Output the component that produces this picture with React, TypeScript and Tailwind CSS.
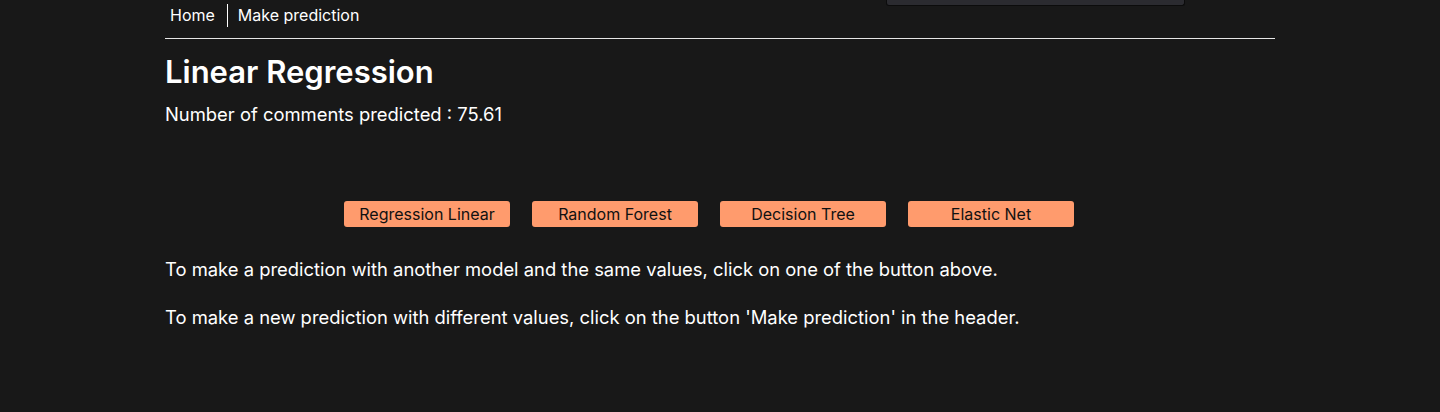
import React from "react";

const models = ["Regression Linear", "Random Forest", "Decision Tree", "Elastic Net"];

export default function App() {
  return (
    <div
      className="relative min-h-[412px] w-full bg-[#181818] text-white"
      style={{ fontFamily: "Inter, 'Noto Sans', sans-serif" }}
    >
      {/* dropdown edge peeking from above */}
      <div className="absolute left-[886px] top-0 h-[6px] w-[299px] rounded-b-[3px] border border-t-0 border-[#0c0c0c] bg-[#2b2b30]" />

      <div className="mx-auto w-[1110px]">
        <nav className="flex h-[39px] items-start border-b border-[#e6e6e6] pt-[4px] text-[16px]">
          <a className="pl-[5px] pr-[12px] leading-[23px]">Home</a>
          <span className="h-[23px] w-px bg-white" />
          <a className="pl-[10px] leading-[23px]">Make prediction</a>
        </nav>

        <h2 className="mt-[13px] text-[31px] font-semibold leading-[40px]">Linear Regression</h2>
        <p className="mt-[9px] text-[18.4px] leading-[27px]">Number of comments predicted : 75.61</p>

        <div className="mt-[73px] flex justify-center">
          {models.map((m) => (
            <button
              key={m}
              className="mr-[22px] h-[26px] w-[166px] rounded-[3px] bg-[#ff9b6d] text-[16px] text-[#111]"
            >
              {m}
            </button>
          ))}
        </div>

        <p className="mt-[29px] text-[18.4px] leading-[27px]">
          To make a prediction with another model and the same values, click on one of the button above.
        </p>
        <p className="mt-[21px] text-[18.4px] leading-[27px]">
          To make a new prediction with different values, click on the button 'Make prediction' in the header.
        </p>
      </div>
    </div>
  );
}
